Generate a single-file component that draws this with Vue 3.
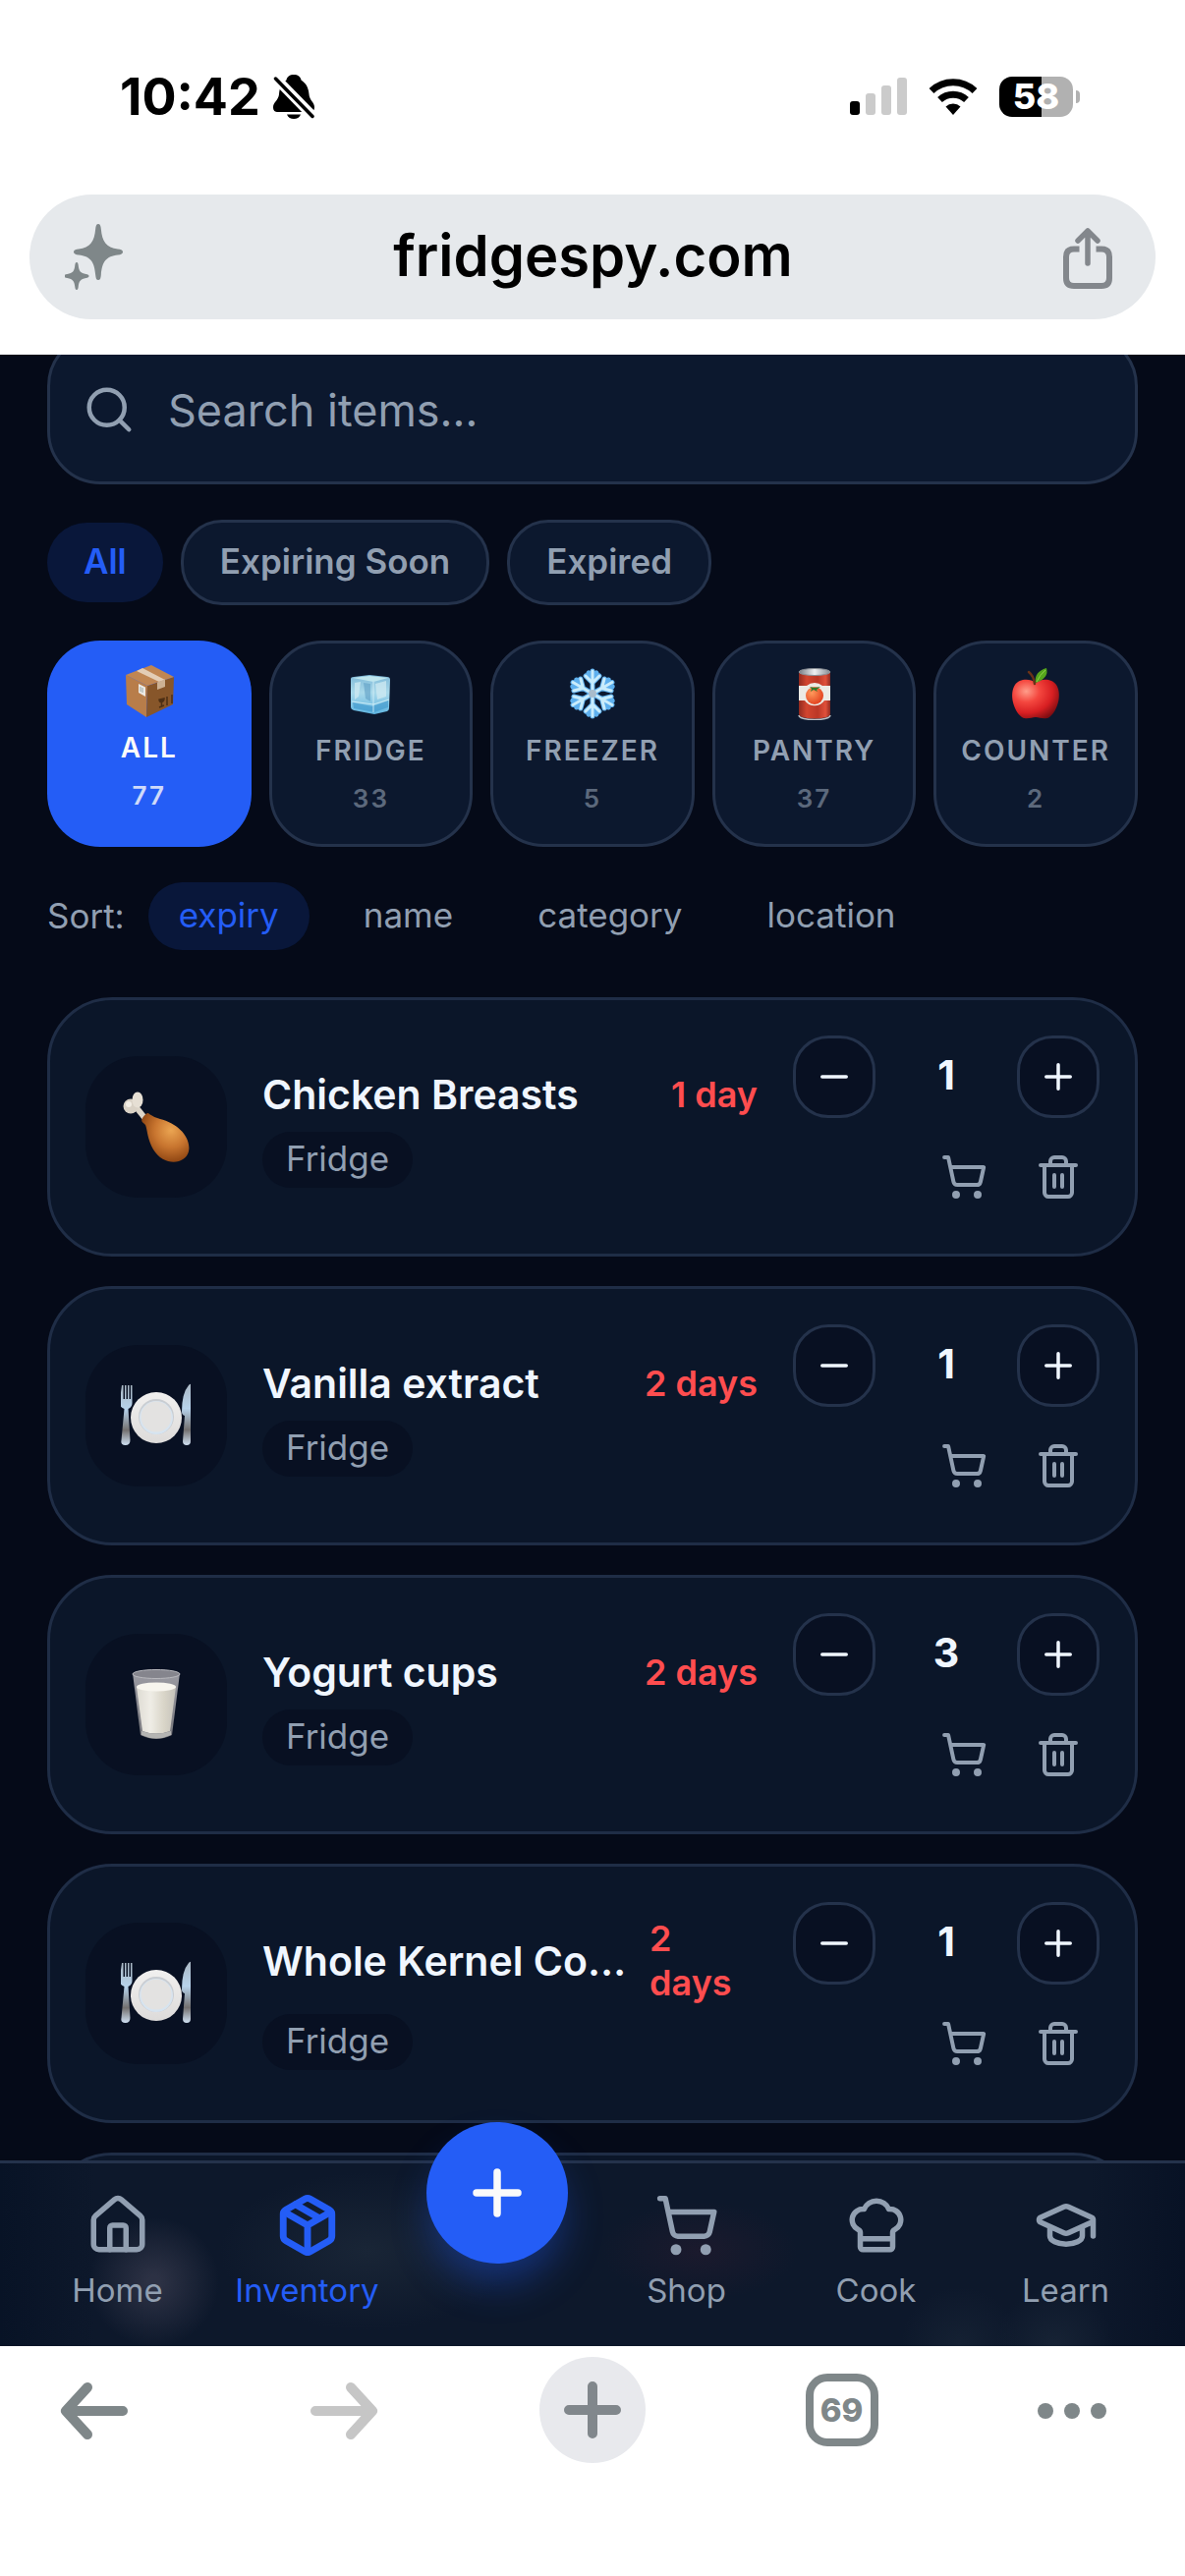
<script setup>
import { ref } from 'vue'

const query = ref('')
const activeFilter = ref('All')
const activePlace = ref('All')
const activeSort = ref('expiry')

const filters = ['All', 'Expiring Soon', 'Expired']
const places = [
  { name: 'All', count: 77, art: 'package' },
  { name: 'Fridge', count: 33, art: 'ice' },
  { name: 'Freezer', count: 5, art: 'snow' },
  { name: 'Pantry', count: 37, art: 'can' },
  { name: 'Counter', count: 2, art: 'apple' },
]
const sorts = ['expiry', 'name', 'category', 'location']
const items = ref([
  { name: 'Chicken Breasts', place: 'Fridge', due: '1 day', qty: 1, art: 'drumstick' },
  { name: 'Vanilla extract', place: 'Fridge', due: '2 days', qty: 1, art: 'plate' },
  { name: 'Yogurt cups', place: 'Fridge', due: '2 days', qty: 3, art: 'milk' },
  { name: 'Whole Kernel Co…', place: 'Fridge', due: '2 days', qty: 1, art: 'plate' },
])
const leftTabs = [
  { label: 'Home', icon: 'home' },
  { label: 'Inventory', icon: 'box', active: true },
]
const rightTabs = [
  { label: 'Shop', icon: 'cart' },
  { label: 'Cook', icon: 'chef' },
  { label: 'Learn', icon: 'grad' },
]
</script>

<template>
  <div class="screen">
    <svg class="sprite" aria-hidden="true">
      <defs>
        <linearGradient id="g-ice" x1="0" y1="0" x2="0" y2="1">
          <stop offset="0" stop-color="#7fb9d8" /><stop offset=".45" stop-color="#a9d9ea" /><stop offset="1" stop-color="#5fb4e0" />
        </linearGradient>
        <linearGradient id="g-can" x1="0" y1="0" x2="1" y2="0">
          <stop offset="0" stop-color="#8f2a20" /><stop offset=".25" stop-color="#d2452f" /><stop offset=".6" stop-color="#bb3726" /><stop offset=".85" stop-color="#e0503a" /><stop offset="1" stop-color="#8f2a20" />
        </linearGradient>
        <linearGradient id="g-tin" x1="0" y1="0" x2="1" y2="0">
          <stop offset="0" stop-color="#777d85" /><stop offset=".5" stop-color="#eef0f2" /><stop offset="1" stop-color="#858b92" />
        </linearGradient>
        <radialGradient id="g-apple" cx=".3" cy=".3" r=".8">
          <stop offset="0" stop-color="#ff9d8a" /><stop offset=".35" stop-color="#f4473f" /><stop offset=".7" stop-color="#d81f22" /><stop offset="1" stop-color="#7d0d12" />
        </radialGradient>
        <radialGradient id="g-tomato" cx=".35" cy=".35" r=".7">
          <stop offset="0" stop-color="#ff9a5c" /><stop offset="1" stop-color="#e2401d" />
        </radialGradient>
        <radialGradient id="g-meat" cx=".62" cy=".35" r=".7">
          <stop offset="0" stop-color="#eba552" /><stop offset=".5" stop-color="#c8752f" /><stop offset="1" stop-color="#88400f" />
        </radialGradient>
        <linearGradient id="g-plate" x1="0" y1="0" x2="0" y2="1">
          <stop offset="0" stop-color="#f1f0ef" /><stop offset="1" stop-color="#dddbda" />
        </linearGradient>
        <linearGradient id="g-steel" x1="0" y1="0" x2="0" y2="1">
          <stop offset="0" stop-color="#aab8c4" /><stop offset=".4" stop-color="#b7d3ec" /><stop offset=".75" stop-color="#73706f" /><stop offset="1" stop-color="#cfe0f2" />
        </linearGradient>
        <linearGradient id="g-milk" x1="0" y1="0" x2="1" y2="0">
          <stop offset="0" stop-color="#dedbd3" /><stop offset=".35" stop-color="#efede6" /><stop offset=".7" stop-color="#d9d5c8" /><stop offset="1" stop-color="#c5c2bb" />
        </linearGradient>
        <linearGradient id="g-glass" x1="0" y1="0" x2="0" y2="1">
          <stop offset="0" stop-color="#9a9aa2" /><stop offset="1" stop-color="#77777c" />
        </linearGradient>
      </defs>

      <symbol id="art-package" viewBox="0 0 54 54">
        <path d="M3 11 25 22 24 54 4 41Z" fill="#b87d4a" />
        <path d="M25 22 52 13 51 41 24 54Z" fill="#87562a" />
        <path d="M3 11 29 1 52 13 25 22Z" fill="#c08653" />
        <path d="M14 7 20 4 43 16 37 18Z" fill="#e3cdb6" />
        <path d="M35 18.500 43 15.500 43 23 35 26Z" fill="#cdb193" />
        <path d="M16 20 23 23.500 23 33 16 29Z" fill="#ece9e5" />
        <path d="M18 23v5M20 24v5" stroke="#9aa" stroke-width="1" />
        <path d="M37 36c0 4 5 3 5-1zM39.500 38v5M37 44l5-2M45 33v9M50 31v9" stroke="#4d2f14" stroke-width="1.500" fill="#4d2f14" />
      </symbol>
      <symbol id="art-ice" viewBox="0 0 54 54">
        <path d="M7 12Q7 10 10 10L26 8 44 10Q47 10 47 13L46 42Q46 44 44 45L31 48 10 44Q7 43 7 41Z" fill="url(#g-ice)" />
        <path d="M9 11 26 9 45 11 30 15Z" fill="#bfe6ee" />
        <path d="M11 16 17 15 15 30 11 33ZM32 17 43 14 43 30 34 33Z" fill="#cfe9f2" opacity=".75" />
        <path d="M20 16 27 17 27 35 22 32Z" fill="#5f9fc4" opacity=".6" />
        <path d="M9 36 29 40 45 34 45 41 31 46 10 42Z" fill="#3f98cc" opacity=".65" />
        <path d="M30 15V46M8 35l22 3 16-5" stroke="#d9f4fa" stroke-width="1" fill="none" opacity=".8" />
      </symbol>
      <symbol id="art-snow" viewBox="0 0 54 54">
        <g stroke="#5eb0ee" stroke-width="5" stroke-linecap="round" fill="none">
          <g id="snow-arm"><path d="M27 27V4M27 16l-7-7M27 16l7-7M27 10l-4-4M27 10l4-4" /></g>
          <use href="#snow-arm" transform="rotate(60 27 27)" /><use href="#snow-arm" transform="rotate(120 27 27)" />
          <use href="#snow-arm" transform="rotate(180 27 27)" /><use href="#snow-arm" transform="rotate(240 27 27)" />
          <use href="#snow-arm" transform="rotate(300 27 27)" />
        </g>
        <g stroke="#c9ecfb" stroke-width="3" stroke-linecap="round" fill="none">
          <g id="snow-arm-hi"><path d="M27 27V4M27 16l-7-7M27 16l7-7" /></g>
          <use href="#snow-arm-hi" transform="rotate(60 27 27)" /><use href="#snow-arm-hi" transform="rotate(120 27 27)" />
          <use href="#snow-arm-hi" transform="rotate(180 27 27)" /><use href="#snow-arm-hi" transform="rotate(240 27 27)" />
          <use href="#snow-arm-hi" transform="rotate(300 27 27)" />
        </g>
        <circle cx="27" cy="27" r="4" fill="#a9bccb" />
      </symbol>
      <symbol id="art-can" viewBox="0 0 54 54">
        <path d="M11 5h32v43c0 6-32 6-32 0z" fill="url(#g-can)" />
        <path d="M11 19h8a12 12 0 0 1 16 0h8v15h-6a12 12 0 0 1-20 0h-6z" fill="#eceae4" />
        <circle cx="27" cy="29" r="9" fill="url(#g-tomato)" />
        <path d="M22 20l5 1 6-1-4 3 1 2-4-2-3 2 1-3z" fill="#2f7a2b" />
        <path d="M11 49c0 6 32 6 32 0" stroke="#b9bdc2" stroke-width="1.500" fill="none" />
        <ellipse cx="27" cy="5" rx="16" ry="3.500" fill="url(#g-tin)" stroke="#8a8f96" />
      </symbol>
      <symbol id="art-apple" viewBox="0 0 54 54">
        <path d="M27 16C33 11 44 12 48 18 54 27 50 44 41 51 36 54 31 51 27 51S18 54 13 51C4 44 0 27 6 18 10 12 21 11 27 16Z" fill="url(#g-apple)" />
        <path d="M26 17Q25 9 20 5" stroke="#6a3218" stroke-width="2.500" fill="none" stroke-linecap="round" />
        <path d="M27 16Q25 5 38 1 41 11 27 16Z" fill="#55a51c" />
        <path d="M28 15Q31 8 37 3" stroke="#8fce4a" stroke-width="1" fill="none" />
      </symbol>
      <symbol id="art-drumstick" viewBox="0 0 72 72">
        <path d="M14 14 26 29" stroke="#ddd5c9" stroke-width="6" />
        <circle cx="10" cy="15" r="7.500" fill="#d9d1c5" /><ellipse cx="17" cy="8.500" rx="5.500" ry="8" fill="#e6dfd4" />
        <path d="M22 27Q27 20 29 23 33 26 40 28C57 32 72 46 69 61 66 74 44 77 33 59 27 49 27 39 25 34 22 31 20 31 22 27Z" fill="url(#g-meat)" />
        <circle cx="8" cy="13" r="3" fill="#f3eee6" />
      </symbol>
      <symbol id="art-plate" viewBox="0 0 72 72">
        <circle cx="36" cy="38" r="26" fill="url(#g-plate)" />
        <circle cx="36" cy="37" r="18" fill="#c9cdd2" /><circle cx="36" cy="38" r="17" fill="#d7e4f0" /><circle cx="36" cy="37" r="15.500" fill="#e3e2e1" />
        <g fill="url(#g-steel)">
          <path d="M1 5h1.500v14h1.500V5h1.500v14h1.500V5h1.500v14h1.500V5h1.500v18q0 4-4 6l2 32q0 5-5 5t-4-5l3-32q-5-2-5-6z" />
          <path d="M71 4Q71 3 69 5 62 13 62 32q0 3 3 4l-2 26q0 4 4 4t4-4z" />
        </g>
      </symbol>
      <symbol id="art-milk" viewBox="0 0 72 72">
        <path d="M12 4h48L52 67q-16 8-32 0z" fill="url(#g-glass)" />
        <path d="M16 18h40L50 63q-14 5-28 0z" fill="url(#g-milk)" />
        <ellipse cx="36" cy="18" rx="20" ry="4.500" fill="#f7f5ee" />
        <path d="M21 63q15 5 30 0v4q-15 7-30 0z" fill="#b5b5b3" />
        <ellipse cx="36" cy="5" rx="24" ry="4.500" fill="#85858d" stroke="#b9b9be" />
      </symbol>

      <symbol id="i-search" viewBox="0 0 24 24"><circle cx="11" cy="11" r="8" /><path d="m21 21-4.300-4.300" /></symbol>
      <symbol id="i-minus" viewBox="0 0 24 24"><path d="M5 12h14" /></symbol>
      <symbol id="i-plus" viewBox="0 0 24 24"><path d="M5 12h14M12 5v14" /></symbol>
      <symbol id="i-cart" viewBox="0 0 24 24">
        <circle cx="8" cy="21" r="1" /><circle cx="19" cy="21" r="1" />
        <path d="M2.050 2.050h2l2.660 12.420a2 2 0 0 0 2 1.580h9.780a2 2 0 0 0 1.950-1.570l1.650-7.430H5.120" />
      </symbol>
      <symbol id="i-trash" viewBox="0 0 24 24">
        <path d="M3 6h18M19 6v14c0 1-1 2-2 2H7c-1 0-2-1-2-2V6M8 6V4c0-1 1-2 2-2h4c1 0 2 1 2 2v2M10 11v6M14 11v6" />
      </symbol>
      <symbol id="i-home" viewBox="0 0 24 24">
        <path d="M15 21v-8a1 1 0 0 0-1-1h-4a1 1 0 0 0-1 1v8" />
        <path d="M3 10a2 2 0 0 1 .709-1.528l7-5.999a2 2 0 0 1 2.582 0l7 5.999A2 2 0 0 1 21 10v9a2 2 0 0 1-2 2H5a2 2 0 0 1-2-2z" />
      </symbol>
      <symbol id="i-box" viewBox="0 0 24 24">
        <path d="M11 21.730a2 2 0 0 0 2 0l7-4A2 2 0 0 0 21 16V8a2 2 0 0 0-1-1.730l-7-4a2 2 0 0 0-2 0l-7 4A2 2 0 0 0 3 8v8a2 2 0 0 0 1 1.730z" />
        <path d="M12 22V12M3.290 7 12 12l8.710-5M7.500 4.270l9 5.150" />
      </symbol>
      <symbol id="i-chef" viewBox="0 0 24 24">
        <path d="M17 21a1 1 0 0 0 1-1v-5.350c0-.457.316-.844.727-1.041a4 4 0 0 0-2.134-7.589 5 5 0 0 0-9.186 0 4 4 0 0 0-2.134 7.588c.411.198.727.585.727 1.041V20a1 1 0 0 0 1 1ZM6 17h12" />
      </symbol>
      <symbol id="i-grad" viewBox="0 0 24 24">
        <path d="M21.420 10.922a1 1 0 0 0-.019-1.838L12.830 5.180a2 2 0 0 0-1.660 0L2.600 9.080a1 1 0 0 0 0 1.832l8.570 3.908a2 2 0 0 0 1.660 0zM22 10v6M6 12.500V16a6 3 0 0 0 12 0v-3.500" />
      </symbol>
    </svg>

    <header class="status">
      <div class="clock">
        <span>10:42</span>
        <svg width="42" height="46" viewBox="0 0 42 46" aria-label="Silent mode">
          <path d="M21 1c4 0 7 2 7.500 5.500C34 10 36 15 36.500 21c.3 6 5.500 8 5.500 13 0 4-2 5-5 5H5c-3 0-5-1-5-5 0-5 5.500-7 6-13C6.500 15 8 10 13.500 6.500 14 3 17 1 21 1zM14 41.500h14c-1 3-4 4.500-7 4.500s-6-1.500-7-4.500z" />
          <path d="M2 4 41 44" stroke="#fff" stroke-width="10" />
          <path d="M2.500 5 40 43.500" stroke="#000" stroke-width="3.500" stroke-linecap="round" />
        </svg>
      </div>
      <div class="signals">
        <svg width="58" height="38" viewBox="0 0 58 38" aria-label="Signal">
          <rect y="24" width="10" height="14" rx="3" /><g fill="#cbcbcb"><rect x="16" y="16" width="10" height="22" rx="3" /><rect x="32" y="8" width="10" height="30" rx="3" /><rect x="48" width="10" height="38" rx="3" /></g>
        </svg>
        <svg width="50" height="38" viewBox="0 0 50 38" aria-label="Wi-Fi">
          <path d="M25 38l-7.500-8.500a11 11 0 0 1 15 0z" />
          <g fill="none" stroke="#000" stroke-width="7"><path d="M3 13.500a32 32 0 0 1 44 0" /><path d="M11.500 22.500a20 20 0 0 1 27 0" /></g>
        </svg>
        <div class="battery">58</div>
      </div>
    </header>

    <div class="address">
      <button type="button" aria-label="Assistant">
        <svg width="60" height="68" viewBox="0 0 60 68" fill="#7f8789">
          <path d="M34 0c2 0 2.500 2 2.800 5C38 18 42 24 54 25.500c3 .4 5 1 5 3s-2 2.600-5 3C42 33 38 38 36.800 52c-.3 3-.8 5-2.800 5s-2.500-2-2.800-5C30 38 26 33 14 31.500c-3-.4-5-1-5-3s2-2.600 5-3C26 24 30 18 31.200 5c.3-3 .8-5 2.800-5z" />
          <path d="M12 39c1.300 0 1.500 1.500 1.700 3 .6 6 2.300 8 7.800 9 2 .3 3 .8 3 2s-1 1.700-3 2c-5.500 1-7.200 3-7.800 9-.2 1.500-.4 3-1.700 3s-1.500-1.500-1.700-3c-.6-6-2.300-8-7.800-9-2-.3-3-.8-3-2s1-1.700 3-2c5.500-1 7.200-3 7.800-9 .2-1.500.4-3 1.700-3z" />
        </svg>
      </button>
      <span class="url">fridgespy.com</span>
      <button type="button" aria-label="Share">
        <svg width="52" height="64" viewBox="0 0 52 64" fill="none" stroke="#83878c" stroke-width="6" stroke-linecap="round" stroke-linejoin="round">
          <path d="M26 38V5M16 15 26 5l10 10" stroke-width="5.500" />
          <path d="M17.500 23.500H12q-8 0-8 8V53q0 8 8 8h28q8 0 8-8V31.500q0-8-8-8h-5.500" stroke-linecap="butt" />
        </svg>
      </button>
    </div>

    <main class="app">
      <div class="content">
        <label class="search">
          <svg class="icon i54"><use href="#i-search" /></svg>
          <input v-model="query" type="text" placeholder="Search items…" aria-label="Search items" />
        </label>

        <div class="chips">
          <button v-for="f in filters" :key="f" type="button" :class="['chip', { on: f === activeFilter }]" @click="activeFilter = f">{{ f }}</button>
        </div>

        <div class="places">
          <button v-for="p in places" :key="p.name" type="button" :class="['place', { on: p.name === activePlace }]" @click="activePlace = p.name">
            <svg class="place-art"><use :href="'#art-' + p.art" /></svg>
            <span class="place-name">{{ p.name }}</span>
            <span class="place-count">{{ p.count }}</span>
          </button>
        </div>

        <div class="sort">
          <span>Sort:</span>
          <button v-for="s in sorts" :key="s" type="button" :class="{ on: s === activeSort }" @click="activeSort = s">{{ s }}</button>
        </div>

        <ul class="list">
          <li v-for="item in items" :key="item.name" class="card">
            <div class="thumb"><svg class="item-art"><use :href="'#art-' + item.art" /></svg></div>
            <div class="info">
              <div class="title">
                <h2>{{ item.name }}</h2>
                <span class="due">{{ item.due }}</span>
              </div>
              <span class="tag">{{ item.place }}</span>
            </div>
            <div class="controls">
              <div class="stepper">
                <button type="button" aria-label="Decrease" @click="item.qty--"><svg class="icon i48"><use href="#i-minus" /></svg></button>
                <span>{{ item.qty }}</span>
                <button type="button" aria-label="Increase" @click="item.qty++"><svg class="icon i48"><use href="#i-plus" /></svg></button>
              </div>
              <div class="actions">
                <button type="button" aria-label="Add to shopping list"><svg class="icon i48"><use href="#i-cart" /></svg></button>
                <button type="button" aria-label="Delete"><svg class="icon i48"><use href="#i-trash" /></svg></button>
              </div>
            </div>
          </li>
          <li class="card" aria-hidden="true"></li>
        </ul>
      </div>
    </main>

    <nav class="tabs">
      <a v-for="t in leftTabs" :key="t.label" href="#" :class="{ on: t.active }">
        <svg class="icon i66"><use :href="'#i-' + t.icon" /></svg>{{ t.label }}
      </a>
      <div class="fab-slot">
        <button class="fab" type="button" aria-label="Add item"><svg class="icon i72"><use href="#i-plus" /></svg></button>
      </div>
      <a v-for="t in rightTabs" :key="t.label" href="#">
        <svg class="icon i66"><use :href="'#i-' + t.icon" /></svg>{{ t.label }}
      </a>
    </nav>

    <footer class="toolbar">
      <button type="button" aria-label="Back">
        <svg width="70" height="66" viewBox="0 0 70 66" fill="none" stroke="#7f8789" stroke-width="10" stroke-linecap="round" stroke-linejoin="round"><path d="M64 34H7M28 10 6 34l22 24" /></svg>
      </button>
      <button type="button" aria-label="Forward" disabled>
        <svg width="70" height="66" viewBox="0 0 70 66" fill="none" stroke="#c6c6c6" stroke-width="10" stroke-linecap="round" stroke-linejoin="round"><path d="M6 34h57M42 10l22 24-22 24" /></svg>
      </button>
      <button class="new-tab" type="button" aria-label="New tab">
        <svg width="58" height="58" viewBox="0 0 58 58" fill="none" stroke="#81878c" stroke-width="10" stroke-linecap="round"><path d="M29 5v48M5 29h48" /></svg>
      </button>
      <button type="button" aria-label="Open tabs"><span class="tab-count">69</span></button>
      <button class="more" type="button" aria-label="Menu">
        <svg width="70" height="18" viewBox="0 0 70 18" fill="#7f8789"><circle cx="8" cy="10" r="8" /><circle cx="35" cy="10" r="8" /><circle cx="62" cy="10" r="8" /></svg>
      </button>
    </footer>
  </div>
</template>

<style>
body { background: #fff; }
</style>

<style scoped>
.screen {
  --muted: #919fb1;
  --blue: #245df6;
  --line: #24324b;
  --panel: #0c182e;
  display: flex;
  flex-direction: column;
  height: 100vh;
  background: #fff;
  font-family: Inter, "Liberation Sans", sans-serif;
  overflow: hidden;
}
.sprite { position: absolute; width: 0; height: 0; }
button { margin: 0; padding: 0; border: 0; background: none; font: inherit; color: inherit; }
svg { display: block; flex: none; }
.icon { fill: none; stroke: currentColor; stroke-width: 2; stroke-linecap: round; stroke-linejoin: round; }
.i48 { width: 48px; height: 48px; }
.i54 { width: 54px; height: 54px; }
.i66 { width: 66px; height: 66px; }
.i72 { width: 72px; height: 72px; stroke-width: 2.5; }

.status { flex: none; display: flex; justify-content: space-between; align-items: center; height: 196px; padding: 0 114px 0 122px; margin-bottom: 2px; color: #000; }
.clock { display: flex; align-items: center; gap: 13px; font-size: 52px; font-weight: 700; }
.signals { display: flex; align-items: center; gap: 22px; }
.battery { position: relative; width: 75px; height: 41px; border-radius: 13px; background: linear-gradient(90deg, #000 57%, #b1b1b1 57%); color: #fff; font-size: 36px; font-weight: 800; line-height: 41px; text-align: center; }
.battery::after { content: ""; position: absolute; left: 78px; top: 14px; width: 4px; height: 13px; border-radius: 0 6px 6px 0; background: #b1b1b1; }

.address { flex: none; display: flex; align-items: center; justify-content: space-between; height: 127px; margin: 0 30px 36px; padding: 0 43px 0 36px; border-radius: 64px; background: #e6e9ec; color: #000; }
.url { padding-bottom: 4px; font-size: 58px; font-weight: 600; }

.app { flex: 1; min-height: 0; overflow: hidden; background: #050a18; color: var(--muted); }
/* The list is scrolled a little way past the top of the search box. */
.content { display: flex; flex-direction: column; gap: 36px; margin-top: -22px; padding: 0 48px; }
.search { display: flex; align-items: center; gap: 33px; height: 154px; box-sizing: border-box; padding: 2px 33px 0; border: 3px solid var(--line); border-radius: 54px; background: var(--panel); }
.search input { flex: 1; min-width: 0; padding: 0; border: 0; outline: 0; background: none; color: #f0f6ff; font: 400 45px Inter, "Liberation Sans", sans-serif; }
.search input::placeholder { color: var(--muted); opacity: 1; }

.chips { display: flex; align-items: center; gap: 18px; }
.chip { padding: 17px 37px 19px; border: 3px solid var(--line); border-radius: 42px; background: var(--panel); font-size: 35px; line-height: 45px; font-weight: 600; }
.chip.on { border: 0; background: #09173a; color: var(--blue); }

.places { display: grid; grid-template-columns: repeat(5, 1fr); gap: 18px; }
.place { display: flex; flex-direction: column; align-items: center; height: 210px; box-sizing: border-box; padding-top: 24px; border: 3px solid var(--line); border-radius: 54px; background: var(--panel); font-weight: 600; letter-spacing: 2px; }
.place.on { border: 0; background: var(--blue); color: #fafafa; }
.place-art { width: 54px; height: 54px; }
.place-name { margin-top: 9px; font-size: 28px; line-height: 45px; text-transform: uppercase; }
.place-count { margin-top: 6px; font-size: 26px; line-height: 39px; opacity: .6; }
.place.on .place-count { opacity: .8; }

.sort { display: flex; align-items: center; gap: 24px; font-size: 35px; line-height: 45px; }
.sort button { padding: 11px 31px 13px; border-radius: 36px; }
.sort .on { background: #09173a; color: var(--blue); }

.list { display: flex; flex-direction: column; gap: 30px; margin: 12px 0 0; padding: 0; list-style: none; }
.card { display: flex; align-items: center; gap: 36px; min-height: 264px; box-sizing: border-box; padding: 36px; border: 3px solid #1f2d46; border-radius: 66px; background: #0b1629; }
.thumb { flex: none; display: grid; place-items: center; width: 144px; height: 144px; border-radius: 54px; background: #081022; }
.item-art { width: 72px; height: 72px; }
.info { flex: 1; min-width: 0; display: flex; flex-direction: column; align-items: flex-start; gap: 9px; }
.title { display: flex; align-items: center; justify-content: space-between; gap: 24px; width: 100%; }
.title h2 { flex: none; max-width: calc(100% - 120px); margin: 0; overflow: hidden; color: #f0f6ff; font-size: 41px; line-height: 58px; font-weight: 600; white-space: nowrap; text-overflow: ellipsis; }
.due { color: #ff4d4f; font-size: 36px; line-height: 45px; font-weight: 600; }
.tag { padding: 5px 24px 7px; border-radius: 30px; background: #081022; font-size: 35px; line-height: 45px; }
.controls { flex: none; display: flex; flex-direction: column; align-items: flex-end; gap: 18px; }
.stepper { display: flex; align-items: center; color: #f0f6ff; }
.stepper span { width: 144px; padding-bottom: 4px; font-size: 41px; line-height: 58px; font-weight: 700; text-align: center; }
.stepper button, .actions button { display: grid; place-items: center; width: 84px; height: 84px; box-sizing: border-box; }
.stepper button { border: 3px solid var(--line); border-radius: 36px; background: #081022; }
.stepper .icon { width: 42px; height: 42px; }
.actions { display: flex; gap: 12px; }

.tabs {
  position: relative;
  flex: none;
  display: grid;
  grid-template-columns: repeat(6, 1fr);
  height: 189px;
  box-sizing: border-box;
  padding: 30px 25px 0 23px;
  border-top: 3px solid var(--line);
  background:
    radial-gradient(circle 66px at 13% 65%, #2c3144 10%, transparent),
    radial-gradient(ellipse 150px 80px at 31% 48%, #192536, transparent),
    radial-gradient(ellipse 100px 50px at 59% 48%, #1b1a2d, transparent),
    radial-gradient(circle 60px at 81% 100%, #152133, transparent),
    radial-gradient(circle 60px at 89% 100%, #172335, transparent),
    linear-gradient(90deg, #081326, #0d182b 8%, #0d182b 92%, #081225);
}
.tabs a { display: flex; flex-direction: column; align-items: center; gap: 11px; color: var(--muted); font-size: 33px; line-height: 45px; text-decoration: none; }
.tabs a.on { color: var(--blue); }
.tabs a.on .icon { stroke-width: 2.5; }
.fab-slot { display: flex; justify-content: center; }
.fab { display: grid; place-items: center; width: 144px; height: 144px; margin-top: -72px; border-radius: 50%; background: var(--blue); color: #fafafa; box-shadow: 0 24px 40px -6px rgba(36, 93, 246, .4); }

.toolbar { flex: none; display: flex; justify-content: space-between; align-items: flex-start; height: 234px; box-sizing: border-box; padding: 11px 84px 0 42px; background: #fff; }
.toolbar button { display: grid; place-items: center; width: 108px; height: 108px; border-radius: 50%; }
.toolbar .new-tab { background: #e8e9ed; }
.toolbar .more { width: 66px; }
.tab-count { width: 74px; height: 74px; box-sizing: border-box; border: 8px solid #7f8789; border-radius: 22px; color: #7f8789; font-size: 33px; line-height: 58px; font-weight: 800; text-align: center; }
</style>
